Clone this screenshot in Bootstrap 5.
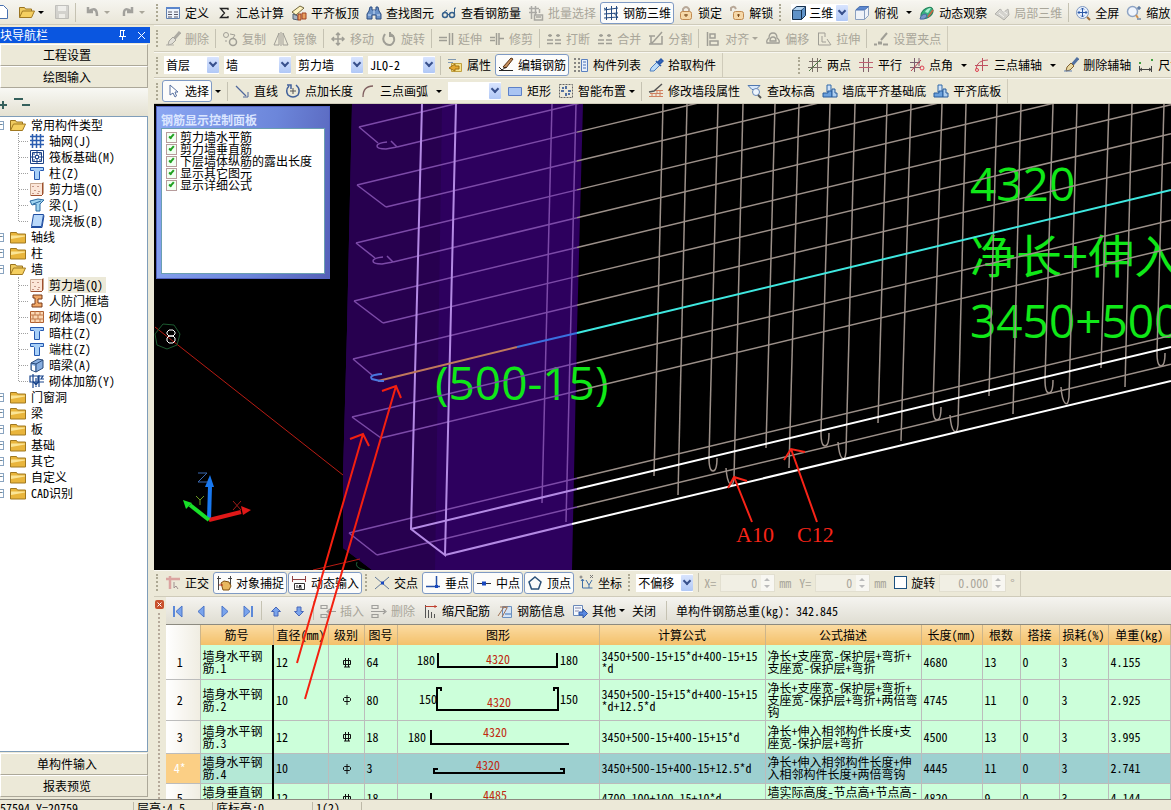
<!DOCTYPE html>
<html lang="zh-CN">
<head>
<meta charset="utf-8">
<meta name="viewport" content="width=device-width, initial-scale=1">
<title>钢筋三维</title>
<link href="https://cdn.jsdelivr.net/npm/bootstrap@5.3.0/dist/css/bootstrap.min.css" rel="stylesheet">
<style>
  body{font:12px/12px "Noto Sans Mono CJK SC","Noto Sans CJK SC",sans-serif;color:#000;background:#ece9d8}
  button,select,input{font:inherit;color:inherit}
  .ic{width:16px;height:16px;flex:none;fill:none;stroke-width:1}
  .bars{flex:none}
  .barrow{display:flex;align-items:stretch;background:#ece9d8;border-bottom:1px solid #cfcbba;border-top:1px solid #f8f7f1}
  .r1{height:25px;background:linear-gradient(#f6f5f0,#e9e6d8)} .r2{height:27px} .r3{height:26px}
  .seg{display:flex;align-items:center;gap:5px;padding:0 5px 0 2px;border-right:1px solid #cfcbba;flex:none}
  .seg.far{margin-left:73px}
  .seg.open-end{border:0}
  .snapbar .seg{padding-bottom:2px}
  .grip{width:3px;height:17px;border-left:2px dotted #aca893;flex:none}
  .rule{width:1px;height:19px;background:#c5c2b2;flex:none}
  .tool{display:flex;align-items:center;gap:4px;height:20px;padding:0;border:1px solid transparent;background:none;white-space:nowrap;flex:none}
  .tool:disabled{color:#a9a69a}
  .tool:disabled .ic{filter:grayscale(1);opacity:.5}
  .tool.on{height:22px;margin:0 -2px;padding:0 2px;background:#fcfcfb;border-color:#7f9ac4;border-radius:3px}
  .tool.drop::after,.caret-only::after{content:"";border:3px solid transparent;border-top-color:#000;border-bottom:0;margin:0 0 0 4px}
  .tool.drop:disabled::after{border-top-color:#a9a69a}
  .tool.drop.tight::after{margin-left:-1px}
  .caret-only{width:7px;border:0;background:none;padding:0;display:flex}
  .caret-only::after{margin:0}
  .combo{display:flex;align-items:center;background:#fff;height:18px;position:relative;flex:none}
  .combo select{appearance:none;border:0;background:none;padding:0 0 0 2px;width:100%;height:18px;outline:0}
  .combo::after{content:"";width:12px;height:16px;position:absolute;right:0;top:1px;background:linear-gradient(#d8e4fe,#b0c8f6);border-radius:1px;pointer-events:none}
  .combo::before{content:"";width:6px;height:6px;position:absolute;right:3px;top:4px;border:solid #38508c;border-width:0 2px 2px 0;transform:rotate(45deg);z-index:1;pointer-events:none}
  .w53{width:53px}.w55{width:55px}.w57{width:57px}.w67{width:67px}
  /* navigation dock */
  .side{width:154px;flex:none;background:#ece9d8}
  .side-top{height:25px;background:linear-gradient(#f6f5f0,#e9e6d8);border-bottom:1px solid #cfcbba}
  .side-top .edge{margin-left:-8px}
  .side-title{height:16px;margin:2px 4px 1px 0;background:#0a56e0;color:#fff}
  .wide{height:22px;margin-right:6px;border:1px solid;border-color:#fff #aca899 #aca899 #fff;background:#ece9d8;padding:0;text-align:center;flex:none}
  .wide.end{margin-bottom:2px}
  .wide span{padding-right:14px}
  .side-mini{height:28px;margin-right:6px;background:linear-gradient(#f8f8f4,#e4e1d2)}
  .tree{margin:0 6px 1px 0;background:#fff;border:1px solid #7f9db9;border-left:0;overflow:hidden}
  .tree ul{list-style:none;margin:0;padding:0}
  .tree li>div{height:16px;display:flex;align-items:center;white-space:nowrap}
  .tree a{color:#000;text-decoration:none;padding:2px 3px 2px 1px}
  .tree a.sel{background:#ece9d8}
  .branch>div::before{content:"−";width:7px;height:9px;margin-left:-3px;border:1px solid #8aa4c0;font-size:9px;line-height:6px;color:#345}
  .branch>div .ic{margin:0 4px 0 6px}
  .leafs{position:relative}
  .leafs::before{content:"";position:absolute;left:18px;top:0;bottom:8px;border-left:1px dotted #a0a0a0}
  .leafs li>div::before{content:"";width:9px;margin-left:19px;border-top:1px dotted #a0a0a0}
  .leafs li>div .ic{margin:0 3px 0 1px}
  /* drawing canvas */
  .view3d{background:#000;overflow:hidden;position:relative}
  .scene{position:absolute;inset:0;width:100%;height:100%}
  .palette{position:absolute;left:2px;top:2px;width:174px;height:173px;padding:4px;background:linear-gradient(100deg,#8aa6f2,#6c86da 60%,#5560b8);border:1px solid #5262c0}
  .palette h2{font-size:12px;line-height:17px;margin:0;color:#dbe6ff;font-weight:700}
  .palette .box{background:#fff;border:1px solid #6a9fb0;flex:1;padding:2px 0 0 4px}
  .palette label{display:flex;align-items:center;gap:3px;height:12px;white-space:nowrap}
  .chk{appearance:none;width:11px;height:11px;margin:0;border:1px solid #b79c9c;background:#f2fff2;position:relative;flex:none}
  .chk:checked::before{content:"";position:absolute;left:3px;top:0;width:3px;height:6px;border:solid #21a121;border-width:0 2px 2px 0;transform:rotate(40deg)}
  .chk.big{width:13px;height:13px;border-color:#1c5180;background:#fff}
  .spin{height:18px;background:#f1efe4;border:1px solid #e2dfd0;display:flex;align-items:center;color:#a9a69a;flex:none}
  .spin input{width:100%;min-width:0;border:0;background:none;text-align:right;padding:0 4px 0 0;color:#a9a69a}
  .spin svg{width:13px;height:16px;flex:none;background:#f8f7f2}
  .muted{color:#a9a69a}
  .fields{display:flex;align-items:center;gap:4px}
  /* bar-bending grid */
  .dock{height:202px;flex:none;background:#ece9d8}
  .dock-edge{width:12px;flex:none}
  .dock-close{width:9px;height:9px;margin:3px 0 4px 1px;padding:0;border:0;background:#c8502c;border-radius:2px;color:#fff;display:flex}
  .dock-close svg{width:9px;height:9px}
  .dock-edge i{flex:1;width:1px;margin-left:4px;border-left:2px dotted #b5a99a}
  .dock-bar{height:28px;display:flex;align-items:center;gap:5px;padding-left:3px;background:linear-gradient(#f5f4f0,#dfddd2);border-bottom:1px solid #8c8a80;flex:none}
  .sheet{overflow:hidden;background:#fff}
  .rebar{table-layout:fixed;width:100%;border-collapse:collapse}
  .rebar th{height:20px;background:linear-gradient(#fbdba2,#f3c06a);border-right:1px solid #cdb58a;text-align:center;font-weight:400;padding:0;white-space:nowrap}
  .rebar th:nth-child(1){width:34px}.rebar th:nth-child(2){width:73px}.rebar th:nth-child(3){width:55px}.rebar th:nth-child(4){width:36px}
  .rebar th:nth-child(5){width:33px}.rebar th:nth-child(6){width:202px}.rebar th:nth-child(7){width:166px}.rebar th:nth-child(8){width:156px}
  .rebar th:nth-child(9){width:61px}.rebar th:nth-child(10){width:38px}.rebar th:nth-child(11){width:39px}.rebar th:nth-child(12){width:49px}
  .rebar td{background:#ccffda;border:1px solid #bcbcbc;border-width:0 1px 1px 0;padding:0 1px 0 2px;vertical-align:middle;word-break:break-all;line-break:anywhere}
  .rebar th:first-child,.rebar td:first-child{background:linear-gradient(90deg,#fff,#f0ede2);text-align:center;padding:0 6px 0 0}
  .rebar td:nth-child(2){border-right:2px solid #000}
  .rebar td:nth-child(7){padding-right:5px}
  .rebar td.c{text-align:center}
  .rebar td.c svg{width:12px;height:12px;fill:none;stroke:#111}
  .rebar td.g{padding:0}
  .rebar td.g svg{display:block;width:100%}
  .rebar .cur td{background:#9dd0d0}
  .rebar .cur td:nth-child(2){background:#b4e8d6}
  .rebar .cur td:first-child{background:#fbcf85;color:#fff}
  .g path{fill:none;stroke:#000;stroke-width:2}
  .g .len{fill:#c02a10}
  .h33{height:34px}.h41{height:41px}.h32{height:33px}.h30{height:30px}
  .state{height:11px;flex:none;border-top:1px solid #8c8a80;overflow:hidden;padding-top:2px}
  .state span{border-right:1px solid #bdb9a8;padding-left:3px;flex:none}
  .state .s1{width:134px;padding-left:0}.state .s2{width:79px}.state .s3{width:100px}.state .s4{width:49px}
  .marks{position:absolute;inset:0;width:100%;height:100%;pointer-events:none}
</style>
<script src="https://cdn.jsdelivr.net/npm/bootstrap@5.3.0/dist/js/bootstrap.bundle.min.js"></script>
</head>
<body class="vh-100 d-flex flex-column overflow-hidden">
<svg class="d-none" xmlns="http://www.w3.org/2000/svg">
  <symbol id="form" viewBox="0 0 16 16"><path d="M1.500 2.500h13v11h-13z" fill="#eef3fb" stroke="#6080b0"/><path d="M1 2h14v2H1z" fill="#5b86cc"/><path d="M3 7h4M3 9.500h4M3 12h4M9 7h4M9 9.500h4M9 12h4" stroke="#556"/></symbol>
  <symbol id="sigma" viewBox="0 0 16 16"><path d="M12 5V3.500H4.500L8.500 8l-4 4.500H12V11" stroke="#222" stroke-width="1.300"/></symbol>
  <symbol id="slab" viewBox="0 0 16 16"><path d="M1 7l8-6 4 2-8 7z" fill="#fdf3c0" stroke="#70653a"/><path d="M2 9v5l5 1v-4z" fill="#a8b4c4" stroke="#506070"/><path d="M7 9h3v6H7zM11 8h4v6h-4z" fill="#e8a060" stroke="#a04020"/></symbol>
  <symbol id="bino" viewBox="0 0 16 16"><path d="M4 2h2v3h4V2h2l1 4 2 3v5h-5v-4H6v4H1V9l2-3z" fill="#6a92c8" stroke="#2d4c80"/><path d="M2 10h3M11 10h3M8 5v4" stroke="#cfe0f8"/></symbol>
  <symbol id="glass" viewBox="0 0 16 16"><circle cx="4" cy="10" r="2.500" stroke="#35608c" stroke-width="1.500"/><circle cx="11" cy="10" r="2.500" stroke="#35608c" stroke-width="1.500"/><path d="M6.500 9.500h2M2 8l4-3M13.500 10V3h1.500" stroke="#35608c"/></symbol>
  <symbol id="batch" viewBox="0 0 16 16"><path d="M1 3.500h10M1 7.500h8M3.500 1v13M7.500 1v9M6.500 10h8v5h-8zM8 12h5M11.500 4v4" stroke="#666" stroke-width="1.500"/></symbol>
  <symbol id="grid3" viewBox="0 0 16 16"><path d="M3.500 2v13M8.500 1v14M13.500 1v14M1 5l14-2M1 9l14-1M1 13l14-1M1 3l3 2M11 8l4 5" stroke="#244a80"/></symbol>
  <symbol id="lock" viewBox="0 0 16 16"><path d="M5 7V4q3-4 6 0v3" stroke="#b8a898" stroke-width="2"/><rect x="2.500" y="6.500" width="11" height="8" rx="2" fill="#f6d8a8" stroke="#c08a50"/><path d="M8 9v3M6 10h4" stroke="#7a4a1a"/></symbol>
  <symbol id="unlock" viewBox="0 0 16 16"><path d="M2 6V3q3-3 5 1" stroke="#b8a898" stroke-width="2"/><rect x="4.500" y="6.500" width="10" height="8" rx="2" fill="#f6d8a8" stroke="#c08a50"/><path d="M9.500 9v3M8 10h3" stroke="#7a4a1a"/></symbol>
  <symbol id="cube" viewBox="0 0 16 16"><path d="M1.500 5l4-3.500h9v9l-4 4h-9z" fill="#5f92c8" stroke="#16304e"/><path d="M1.500 5h9v9.500M10.500 5l4-3.500" stroke="#16304e"/><path d="M2 5l4-3h8l-4 3z" fill="#b8d6f0"/></symbol>
  <symbol id="cubetop" viewBox="0 0 16 16"><path d="M1.500 5l4-3.500h9v9l-4 4h-9z" fill="#eef2f8" stroke="#8aa0c0"/><path d="M2 5l4-3.500h8.500l-4 3.500z" fill="#5c88d0" stroke="#4a70b0"/><path d="M10.500 5v9.500" stroke="#8aa0c0"/></symbol>
  <symbol id="orbit" viewBox="0 0 16 16"><ellipse cx="8" cy="8" rx="7" ry="4.500" transform="rotate(-40 8 8)" fill="#38b080" stroke="#208058"/><path d="M6 7q2-4 6-4l-3 5z" fill="#a8f0d0"/><path d="M1 14q1-5 6-5l1 3q-3 3-7 2z" fill="#7898c8" stroke="#4868a0"/><path d="M9 12l5-7" stroke="#d06040" stroke-width="1.500"/></symbol>
  <symbol id="part" viewBox="0 0 16 16"><path d="M1 9l5-5 4 3 4-3 1 6-5 5-4-3z" fill="#bbb" stroke="#777"/><path d="M5 8l5 4M8 5l5 4" stroke="#fff"/></symbol>
  <symbol id="full" viewBox="0 0 16 16"><circle cx="7.500" cy="7.500" r="6" fill="#e8f0fc" stroke="#7f98c0"/><path d="M7.500 3v9M3 7.500h9M6 4.500L7.500 3 9 4.500M6 10.500l1.500 1.500L9 10.500M4.500 6L3 7.500 4.500 9M10.500 6L12 7.500 10.500 9" stroke="#2a58a8"/><path d="M12 12l3 3" stroke="#a07040" stroke-width="2"/></symbol>
  <symbol id="zoomer" viewBox="0 0 16 16"><circle cx="6.500" cy="6.500" r="5" fill="#f0f5fd" stroke="#8fa4c4" stroke-width="1.500"/><path d="M10 10l2 3" stroke="#d09050" stroke-width="2"/><path d="M13 1v4M11 3h4M11 14h4" stroke="#345a90"/></symbol>
  <symbol id="brush" viewBox="0 0 16 16"><path d="M15 1L9 8" stroke="#5070a0" stroke-width="3"/><path d="M8 6l3 3-4 4-4 1 1-4z" fill="#e8d8a0" stroke="#806030"/><path d="M1 14h8" stroke="#6080b0"/></symbol>
  <symbol id="copy" viewBox="0 0 16 16"><circle cx="4" cy="4" r="2.500" stroke="#555"/><circle cx="11" cy="11" r="3.500" stroke="#555" stroke-width="1.500"/><path d="M8 3l5 1-2 3M4 9v2" stroke="#555"/></symbol>
  <symbol id="mirror" viewBox="0 0 16 16"><path d="M6 2v12H1zM10 2v12h5zM8 1v14" stroke="#555"/></symbol>
  <symbol id="move" viewBox="0 0 16 16"><path d="M8 2v12M2 8h12M6 4l2-2 2 2M6 12l2 2 2-2M4 6L2 8l2 2M12 6l2 2-2 2" stroke="#555" stroke-width="1.500"/></symbol>
  <symbol id="turn" viewBox="0 0 16 16"><path d="M4 3q-4 6 1 10 6 3 8-3 1-5-4-7M9 1v4h4" stroke="#555" stroke-width="2"/></symbol>
  <symbol id="extend" viewBox="0 0 16 16"><path d="M1 6.500h8M1 9.500h8M11.500 2v12M14.500 2v12" stroke="#555" stroke-width="1.500"/></symbol>
  <symbol id="trim" viewBox="0 0 16 16"><path d="M1 6.500h5M1 9.500h5M10 7.500h5M7.500 2v12M10 2v12" stroke="#555" stroke-width="1.500"/></symbol>
  <symbol id="cutbar" viewBox="0 0 16 16"><path d="M2 4.500h4M4 3v3M10 4.500h4M12 3v3M1 9h6M9 9h6M1 12.500h6M9 12.500h6" stroke="#555" stroke-width="1.500"/></symbol>
  <symbol id="split" viewBox="0 0 16 16"><path d="M1 5h6M1 13h13V5M3 5v8M14 1l-8 9-2 2" stroke="#555" stroke-width="1.500"/></symbol>
  <symbol id="align" viewBox="0 0 16 16"><path d="M2.500 1v14M5 3h5v4H5zM5 10h8v4H5z" stroke="#555" stroke-width="1.500"/></symbol>
  <symbol id="offset" viewBox="0 0 16 16"><path d="M2 12q-1-3 2-5 0-5 4-5t4 5q3 2 2 5zM5 10q0-4 3-4t3 4z" stroke="#555" stroke-width="1.300"/></symbol>
  <symbol id="stretch" viewBox="0 0 16 16"><path d="M2.500 2v12h12M2 2h7v4M6 5v6h4M11 8l4 6" stroke="#555"/></symbol>
  <symbol id="clampic" viewBox="0 0 16 16"><path d="M1 13.500h3M10 13.500h5M14 2L8 9" stroke="#555" stroke-width="2"/><path d="M5 12h4" stroke="#555" stroke-width="3"/></symbol>
  <symbol id="prop" viewBox="0 0 16 16"><path d="M1 2.500h8M1 5.500h5" stroke="#8098b0"/><path d="M4.500 6.500h10v8h-10z" fill="#f7e38c" stroke="#c0a040"/><path d="M2 11l6-4v2h4v3H8v2z" fill="#e4a830" stroke="#a07010"/></symbol>
  <symbol id="pencil" viewBox="0 0 16 16"><path d="M1 13.500h14" stroke="#222"/><path d="M5 10l8-9 2 1-7 9z" fill="#c89060" stroke="#543010"/><path d="M1 10l3 3 4-3" stroke="#222"/></symbol>
  <symbol id="listic" viewBox="0 0 16 16"><path d="M1 2h2M1 6h2M1 10h2M1 14h2M5 2h2M5 6h2M5 10h2M5 14h2" stroke="#666" stroke-width="1.500"/><path d="M8.500 2.500h6v12h-6z" fill="#e8f0fa" stroke="#5a80c0"/><path d="M10 5h3M10 8h3M10 11h3" stroke="#4870b8"/></symbol>
  <symbol id="dropper" viewBox="0 0 16 16"><path d="M2 14l1-3 6-6 3 3-6 6z" fill="#bcdcf8" stroke="#5080c0"/><path d="M8 4l5 5M10 5l3-3 2 2-3 3z" stroke="#2858a8" fill="#3868c0" stroke-width="1.500"/></symbol>
  <symbol id="ax2" viewBox="0 0 16 16"><path d="M5.500 1v14M10.500 1v14M1 10.500h14M2 4.500h12" stroke="#7a7068"/><path d="M2 14L14 2" stroke="#4a7a40"/></symbol>
  <symbol id="axp" viewBox="0 0 16 16"><path d="M5.500 1v14M10.500 1v14" stroke="#80606a"/><path d="M1 5.500h14M1 10.500h14" stroke="#c06070"/></symbol>
  <symbol id="axa" viewBox="0 0 16 16"><path d="M5.500 1v14M1 10.500h11M1 5.500h10M10 1v8" stroke="#7a6070"/><path d="M2 14L12 3" stroke="#c04050"/><circle cx="13" cy="11" r="2" stroke="#e04050"/></symbol>
  <symbol id="ax3" viewBox="0 0 16 16"><path d="M2 12Q3 3 14 3M8.500 1v13M1 8.500h13" stroke="#c05060"/><circle cx="3" cy="13" r="1.500" stroke="#e04050"/></symbol>
  <symbol id="dimic" viewBox="0 0 16 16"><path d="M1.500 9v6M13.500 9v6M2 12.500h11M4 11l-2 1.500 2 1.500M11 11l2 1.500-2 1.500" stroke="#444"/><path d="M1 6h2M13 3h2" stroke="#40a040" stroke-width="2"/></symbol>
  <symbol id="arrow" viewBox="0 0 16 16"><path d="M5 2v10l3-2 2 4 1.500-1L10 9h3z" fill="#fff" stroke="#5670a0"/></symbol>
  <symbol id="lineic" viewBox="0 0 16 16"><path d="M2 3l10 10" stroke="#50689c" stroke-width="1.300"/><path d="M14 9v5H9" stroke="#50689c"/></symbol>
  <symbol id="ptlen" viewBox="0 0 16 16"><path d="M4 3q-4 4-1 9 5 4 10 0 3-6-2-10M2 2h4v4" stroke="#40609a" stroke-width="1.500"/><path d="M8 5v6M5 8h6" stroke="#555"/></symbol>
  <symbol id="arcic" viewBox="0 0 16 16"><path d="M3 14Q3 3 13 3" stroke="#806060" stroke-width="1.300"/></symbol>
  <symbol id="rectic" viewBox="0 0 16 16"><path d="M1.500 4.500h13v8h-13z" fill="#a9c4f2" stroke="#5c80c8"/></symbol>
  <symbol id="smart" viewBox="0 0 16 16"><path d="M1.500 1.500h13v13h-13z" stroke="#666" stroke-dasharray="2 1"/><path d="M8 3v3M8 10v3M3 8h3M10 8h3M4 5h2M10 11h2" stroke="#204a90" stroke-width="1.500"/></symbol>
  <symbol id="wallic" viewBox="0 0 16 16"><path d="M6 7.500h9M2 10.500h13M1 13.500h14M9 8v2M12 8v2M8 11v2M4 11v2M12 11v2" stroke="#d08060"/><path d="M14 1L6 8 1 9" stroke="#555" stroke-width="1.500"/></symbol>
  <symbol id="lookup" viewBox="0 0 16 16"><path d="M1 2.500h12l-4 4H5z" fill="#d8e8fa" stroke="#5078b0"/><circle cx="9" cy="9" r="3.500" fill="#eef5fd" stroke="#6888b8"/><path d="M11 12l3 3" stroke="#555" stroke-width="2"/></symbol>
  <symbol id="base" viewBox="0 0 16 16"><path d="M5 2h4v7H5z" fill="#cfe2f8" stroke="#3068a8"/><path d="M1 10h5V8h4v6H1z" fill="#6aa0dc" stroke="#285c9c"/><path d="M10 6h3v4h2v4h-5z" fill="#b0d0f0" stroke="#285c9c"/></symbol>
  <symbol id="ortho" viewBox="0 0 16 16"><path d="M1 4h14M5 1v13" stroke="#dba4a0" stroke-width="2.500"/><path d="M9 7v6l2-2 2 3" stroke="#a09090"/></symbol>
  <symbol id="snap" viewBox="0 0 16 16"><path d="M2.500 1v14M14.500 1v9M1 3.500h4M12 3.500h4" stroke="#444"/><path d="M5 8l3-2 5 1 2 4-2 4H7z" fill="#e8b860" stroke="#805010"/><path d="M3 10h4" stroke="#c03020"/></symbol>
  <symbol id="dyn" viewBox="0 0 16 16"><path d="M1.500 1v6M14.500 1v6M2 4.500h12" stroke="#904040"/><path d="M3.500 8.500h10v6h-10z" fill="#fff" stroke="#333"/><path d="M6 10v3M8 10.500h2v1H8v1.500h3" stroke="#222"/></symbol>
  <symbol id="cross" viewBox="0 0 16 16"><path d="M1 2l14 12M15 2L1 14" stroke="#607898"/><path d="M7 8h3" stroke="#1848c0" stroke-width="3"/></symbol>
  <symbol id="perp" viewBox="0 0 16 16"><path d="M1 11.500h14M11.500 1v12" stroke="#2450a8" stroke-width="1.500"/><path d="M10 11.500h3" stroke="#1848c0" stroke-width="3"/></symbol>
  <symbol id="mid" viewBox="0 0 16 16"><path d="M1 8.500h14" stroke="#333"/><path d="M6 8.500h4" stroke="#1848c0" stroke-width="4"/></symbol>
  <symbol id="vertx" viewBox="0 0 16 16"><path d="M8 2l6 5-2.500 7h-7L2 7z" stroke="#2a5078" stroke-width="1.500"/></symbol>
  <symbol id="coord" viewBox="0 0 16 16"><path d="M4.500 4v9h10M3 6l1.500-2L6 6M8 5l3 5 3-5M11 10v3" stroke="#4070a8"/><circle cx="3" cy="2" r="1" stroke="#777"/><path d="M12 0l3 3M15 0l-3 3" stroke="#777"/></symbol>
  <symbol id="first" viewBox="0 0 16 16"><path d="M4 3v11" stroke="#5b88d8" stroke-width="2"/><path d="M12 3v11L6 8.500z" fill="#7aa4ec" stroke="#4a74c8"/></symbol>
  <symbol id="prev" viewBox="0 0 16 16"><path d="M11 3v11L5 8.500z" fill="#7aa4ec" stroke="#4a74c8"/></symbol>
  <symbol id="next" viewBox="0 0 16 16"><path d="M6 3v11l6-5.500z" fill="#7aa4ec" stroke="#4a74c8"/></symbol>
  <symbol id="last" viewBox="0 0 16 16"><path d="M13 3v11" stroke="#5b88d8" stroke-width="2"/><path d="M5 3v11l6-5.500z" fill="#7aa4ec" stroke="#4a74c8"/></symbol>
  <symbol id="up" viewBox="0 0 16 16"><path d="M8 4l4.500 4.500H10V13H6V8.500H3.500z" fill="#7aa4ec" stroke="#4a68b8"/></symbol>
  <symbol id="down" viewBox="0 0 16 16"><path d="M8 13l4.500-4.500H10V4H6v4.500H3.500z" fill="#7aa4ec" stroke="#4a68b8"/></symbol>
  <symbol id="rowin" viewBox="0 0 16 16"><path d="M1 2.500h6v3H1zM1 11.500h6v3H1zM7 8.500h9M10 6L7 8.500 10 11" stroke="#555" stroke-width="1.200"/></symbol>
  <symbol id="rowdel" viewBox="0 0 16 16"><path d="M1 2.500h6v3H1zM1 11.500h6v3H1zM0 8.500h14M12 6l3 2.500-3 2.500" stroke="#555" stroke-width="1.200"/></symbol>
  <symbol id="scalebar" viewBox="0 0 16 16"><path d="M3.500 2v13M6.500 7v8M9.500 9v6M12.500 11v4" stroke="#555"/><path d="M3 3.500h12M13 2v3" stroke="#c04030"/></symbol>
  <symbol id="info" viewBox="0 0 16 16"><path d="M5.500 3.500h9v11h-9z" fill="#d4e4f6" stroke="#6a90c0"/><path d="M1 13L7 4l3 1-5 9M3 4h8" stroke="#a07050"/><path d="M8 11h6" stroke="#4070b0"/></symbol>
  <symbol id="other" viewBox="0 0 16 16"><path d="M1.500 2.500h9v10h-9z" fill="#f4f8fd" stroke="#6a88b8"/><path d="M3 5h6M3 8h4" stroke="#88a"/><path d="M7 9h4V6l4.500 4.500L11 15v-3H7z" fill="#5a88e0" stroke="#3058a8"/></symbol>
  <symbol id="fold" viewBox="0 0 16 16"><path d="M.5 3.500h6l1 1.500h8v9H.5z" fill="#e9b53c" stroke="#a07820"/><path d="M1 6.500h14v1L1 10z" fill="#fbe596"/></symbol>
  <symbol id="foldo" viewBox="0 0 16 16"><path d="M.5 13.500v-10h5l1 1.500h6v2" fill="#f0cb60" stroke="#9a7420"/><path d="M.5 13.500l3-6.500h12l-3 6.500z" fill="#f5cf60" stroke="#a07820"/></symbol>
  <symbol id="mesh" viewBox="0 0 16 16"><path d="M3.500 1v14M7.500 1v14M11.500 1v14M1 3.500h14M1 7.500h14M1 11.500h14" stroke="#2a5cb0" stroke-width="1.500"/></symbol>
  <symbol id="raft" viewBox="0 0 16 16"><path d="M1.500 1.500h13v13h-13zM3.500 3.500h9v9h-9zM6.500 6.500h3v3h-3zM8 1v5M8 10v5M1 8h5M10 8h5M5 3v3M11 3v3M5 10v3M11 10v3" stroke="#1f4488"/></symbol>
  <symbol id="col" viewBox="0 0 16 16"><path d="M1.500 2.500h13v3h-3l-1 1v8h-5v-8l-1-1h-3z" fill="#a8d0f8" stroke="#2458b0"/></symbol>
  <symbol id="wallq" viewBox="0 0 16 16"><path d="M1.500 2.500h11l2-1v11l-2 2h-11z" fill="#fbe6d8" stroke="#c8a890"/><path d="M4 5v1M9 5v1M6 9v1M10 10v1M4 12v1M9 12v1" stroke="#904838"/><path d="M13.500 2v12M2 14.500h11" stroke="#a05030"/></symbol>
  <symbol id="beam" viewBox="0 0 16 16"><path d="M1 4l8-2 6 1-4 4v7H7V7L3 8z" fill="#a0d4f0" stroke="#2868a0"/><path d="M4 7l8-3" stroke="#2868a0"/></symbol>
  <symbol id="plate" viewBox="0 0 16 16"><path d="M4.500 1.500h10l-2 12h-10z" fill="#b8d8fa" stroke="#1e4ca0"/><path d="M2 14.500h11l2-12" stroke="#1e4ca0"/></symbol>
  <symbol id="frame" viewBox="0 0 16 16"><path d="M4 2h9v4H9v4h4v4H3v-3h3V5H4z" fill="#f0a868" stroke="#7a3a18"/></symbol>
  <symbol id="brick" viewBox="0 0 16 16"><path d="M1.500 2.500h13v11h-13z" fill="#fbd8b4" stroke="#b06030"/><path d="M1 6h14M1 10h14M6 2v4M11 2v4M4 6v4M9 6v4M6 10v4M11 10v4" stroke="#c07848"/></symbol>
  <symbol id="dbeam" viewBox="0 0 16 16"><path d="M2 6l7-4 5 1v8l-7 4-5-2z" fill="#88aee0" stroke="#284878"/><path d="M2 6l5 1 7-4M7 7v8" stroke="#284878"/><path d="M3 8l3 1v5l-3-1z" fill="#fff"/></symbol>
  <symbol id="masn" viewBox="0 0 16 16"><path d="M1 3h8v6H1zM4 1v14M7 5v9M10 2v12M4 8l3 4 3-4M10 3h4l-2 3h3M10 9h5" stroke="#18448c" stroke-width="1.200"/></symbol>
  <symbol id="save" viewBox="0 0 16 16"><path d="M1.500 1.500h13v13h-13z" fill="#b8b8b8" stroke="#909090"/><path d="M4 2h8v5H4zM5 10h6v4H5z" fill="#eee"/></symbol>
  <symbol id="newdoc" viewBox="0 0 16 16"><path d="M2.500 1.500h8l4 4v9h-12z" fill="#fff" stroke="#4870b0"/></symbol>
  <symbol id="hrb" viewBox="0 0 12 12"><path d="M2.500 3.500h7v4h-7zM4.500 1v9M7.500 1v9M3 10h6"/></symbol>
  <symbol id="hpb" viewBox="0 0 12 12"><path d="M3.500 3.500h5l1 1v2l-1 1h-5l-1-1v-2zM6 1v10"/></symbol>
</svg>

<div class="d-flex flex-grow-1 overflow-hidden">
  <aside class="side d-flex flex-column">
    <div class="side-top d-flex align-items-center overflow-hidden">
      <button class="tool edge" aria-label="新建"><svg class="ic"><use href="#newdoc"/></svg></button>
      <button class="tool drop tight ms-2" aria-label="打开"><svg class="ic"><use href="#foldo"/></svg></button>
      <button class="tool ms-2" disabled aria-label="保存"><svg class="ic"><use href="#save"/></svg></button>
      <span class="rule mx-1"></span>
      <button class="tool drop tight ms-1" disabled aria-label="撤销"><svg class="ic" viewBox="0 0 16 16"><path d="M3 3v5h5M3 8q9-7 9 4" stroke="#556" stroke-width="2.500"/></svg></button>
      <button class="tool drop tight ms-2" disabled aria-label="重做"><svg class="ic" viewBox="0 0 16 16"><path d="M12 3v5H7M12 8Q3 1 4 12" stroke="#556" stroke-width="2.500"/></svg></button>
    </div>
    <div class="side-title d-flex align-items-center flex-shrink-0">
      <span class="flex-grow-1">块导航栏</span>
      <svg class="ic" viewBox="0 0 16 16"><path d="M6 3.500h5M6.500 4v5M9.500 4v5M5 9.500h7M8.500 10v3" stroke="#fff"/></svg>
      <svg class="ic ms-1" viewBox="0 0 16 16"><path d="M4 5l7 7M11 5l-7 7" stroke="#fff"/></svg>
    </div>
    <button class="wide"><span>工程设置</span></button>
    <button class="wide"><span>绘图输入</span></button>
    <div class="side-mini flex-shrink-0"><svg width="40" height="28" stroke="#35605c" stroke-width="2"><path d="M-2 17h9M3 13v8M14 11h9M22 17h8"/></svg></div>
    <nav class="tree flex-grow-1">
      <ul>
        <li class="branch"><div><svg class="ic"><use href="#foldo"/></svg><a href="#">常用构件类型</a></div></li>
        <li><ul class="leafs">
          <li><div><svg class="ic"><use href="#mesh"/></svg><a href="#">轴网(J)</a></div></li>
          <li><div><svg class="ic"><use href="#raft"/></svg><a href="#">筏板基础(M)</a></div></li>
          <li><div><svg class="ic"><use href="#col"/></svg><a href="#">柱(Z)</a></div></li>
          <li><div><svg class="ic"><use href="#wallq"/></svg><a href="#">剪力墙(Q)</a></div></li>
          <li><div><svg class="ic"><use href="#beam"/></svg><a href="#">梁(L)</a></div></li>
          <li><div><svg class="ic"><use href="#plate"/></svg><a href="#">现浇板(B)</a></div></li>
        </ul></li>
        <li class="branch"><div><svg class="ic"><use href="#fold"/></svg><a href="#">轴线</a></div></li>
        <li class="branch"><div><svg class="ic"><use href="#fold"/></svg><a href="#">柱</a></div></li>
        <li class="branch"><div><svg class="ic"><use href="#foldo"/></svg><a href="#">墙</a></div></li>
        <li><ul class="leafs">
          <li><div><svg class="ic"><use href="#wallq"/></svg><a href="#" class="sel">剪力墙(Q)</a></div></li>
          <li><div><svg class="ic"><use href="#frame"/></svg><a href="#">人防门框墙</a></div></li>
          <li><div><svg class="ic"><use href="#brick"/></svg><a href="#">砌体墙(Q)</a></div></li>
          <li><div><svg class="ic"><use href="#col"/></svg><a href="#">暗柱(Z)</a></div></li>
          <li><div><svg class="ic"><use href="#col"/></svg><a href="#">端柱(Z)</a></div></li>
          <li><div><svg class="ic"><use href="#dbeam"/></svg><a href="#">暗梁(A)</a></div></li>
          <li><div><svg class="ic"><use href="#masn"/></svg><a href="#">砌体加筋(Y)</a></div></li>
        </ul></li>
        <li class="branch"><div><svg class="ic"><use href="#fold"/></svg><a href="#">门窗洞</a></div></li>
        <li class="branch"><div><svg class="ic"><use href="#fold"/></svg><a href="#">梁</a></div></li>
        <li class="branch"><div><svg class="ic"><use href="#fold"/></svg><a href="#">板</a></div></li>
        <li class="branch"><div><svg class="ic"><use href="#fold"/></svg><a href="#">基础</a></div></li>
        <li class="branch"><div><svg class="ic"><use href="#fold"/></svg><a href="#">其它</a></div></li>
        <li class="branch"><div><svg class="ic"><use href="#fold"/></svg><a href="#">自定义</a></div></li>
        <li class="branch"><div><svg class="ic"><use href="#fold"/></svg><a href="#">CAD识别</a></div></li>
      </ul>
    </nav>
    <button class="wide"><span>单构件输入</span></button>
    <button class="wide end"><span>报表预览</span></button>
  </aside>

  <main class="flex-grow-1 d-flex flex-column position-relative overflow-hidden">
    <div class="bars">
      <div class="barrow r1">
        <div class="seg open-end">
          <span class="grip"></span>
          <button class="tool"><svg class="ic"><use href="#form"/></svg>定义</button>
          <button class="tool"><svg class="ic"><use href="#sigma"/></svg>汇总计算</button>
          <button class="tool"><svg class="ic"><use href="#slab"/></svg>平齐板顶</button>
          <button class="tool"><svg class="ic"><use href="#bino"/></svg>查找图元</button>
          <button class="tool"><svg class="ic"><use href="#glass"/></svg>查看钢筋量</button>
          <button class="tool" disabled><svg class="ic"><use href="#batch"/></svg>批量选择</button>
          <button class="tool on"><svg class="ic"><use href="#grid3"/></svg>钢筋三维</button>
          <button class="tool"><svg class="ic"><use href="#lock"/></svg>锁定</button>
          <button class="tool"><svg class="ic"><use href="#unlock"/></svg>解锁</button>
          <span class="grip me-1"></span>
          <span class="combo w57"><svg class="ic"><use href="#cube"/></svg><select aria-label="视图"><option>三维</option></select></span>
          <button class="tool drop"><svg class="ic"><use href="#cubetop"/></svg>俯视</button>
          <button class="tool"><svg class="ic"><use href="#orbit"/></svg>动态观察</button>
          <button class="tool" disabled><svg class="ic"><use href="#part"/></svg>局部三维</button>
          <span class="rule"></span>
          <button class="tool"><svg class="ic"><use href="#full"/></svg>全屏</button>
          <button class="tool"><svg class="ic"><use href="#zoomer"/></svg>缩放</button>
        </div>
      </div>
      <div class="barrow r2">
        <div class="seg">
          <span class="grip"></span>
          <button class="tool" disabled><svg class="ic"><use href="#brush"/></svg>删除</button>
          <span class="rule"></span>
          <button class="tool" disabled><svg class="ic"><use href="#copy"/></svg>复制</button>
          <button class="tool" disabled><svg class="ic"><use href="#mirror"/></svg>镜像</button>
          <span class="rule"></span>
          <button class="tool" disabled><svg class="ic"><use href="#move"/></svg>移动</button>
          <button class="tool" disabled><svg class="ic"><use href="#turn"/></svg>旋转</button>
          <span class="rule"></span>
          <button class="tool" disabled><svg class="ic"><use href="#extend"/></svg>延伸</button>
          <button class="tool" disabled><svg class="ic"><use href="#trim"/></svg>修剪</button>
          <span class="rule"></span>
          <button class="tool" disabled><svg class="ic"><use href="#cutbar"/></svg>打断</button>
          <button class="tool" disabled><svg class="ic"><use href="#cutbar"/></svg>合并</button>
          <button class="tool" disabled><svg class="ic"><use href="#split"/></svg>分割</button>
          <span class="rule"></span>
          <button class="tool drop tight" disabled><svg class="ic"><use href="#align"/></svg>对齐</button>
          <button class="tool" disabled><svg class="ic"><use href="#offset"/></svg>偏移</button>
          <button class="tool" disabled><svg class="ic"><use href="#stretch"/></svg>拉伸</button>
          <span class="rule"></span>
          <button class="tool" disabled><svg class="ic"><use href="#clampic"/></svg>设置夹点</button>
        </div>
      </div>
      <div class="barrow r3">
        <div class="seg">
          <span class="grip"></span>
          <span class="combo w55"><select aria-label="楼层"><option>首层</option></select></span>
          <span class="combo w67"><select aria-label="构件"><option>墙</option></select></span>
          <span class="combo w67"><select aria-label="类型"><option>剪力墙</option></select></span>
          <span class="combo w67"><select aria-label="名称"><option>JLQ-2</option></select></span>
          <span class="rule"></span>
          <button class="tool"><svg class="ic"><use href="#prop"/></svg>属性</button>
          <button class="tool on"><svg class="ic"><use href="#pencil"/></svg>编辑钢筋</button>
          <button class="tool"><svg class="ic"><use href="#listic"/></svg>构件列表</button>
          <button class="tool"><svg class="ic"><use href="#dropper"/></svg>拾取构件</button>
        </div>
        <div class="seg far open-end">
          <span class="grip"></span>
          <button class="tool"><svg class="ic"><use href="#ax2"/></svg>两点</button>
          <button class="tool"><svg class="ic"><use href="#axp"/></svg>平行</button>
          <button class="tool drop"><svg class="ic"><use href="#axa"/></svg>点角</button>
          <button class="tool drop"><svg class="ic"><use href="#ax3"/></svg>三点辅轴</button>
          <button class="tool"><svg class="ic"><use href="#brush"/></svg>删除辅轴</button>
          <button class="tool"><svg class="ic"><use href="#dimic"/></svg>尺寸</button>
        </div>
      </div>
      <div class="barrow r3">
        <div class="seg">
          <span class="grip"></span>
          <button class="tool on"><svg class="ic"><use href="#arrow"/></svg>选择</button>
          <button class="caret-only" aria-label="选择方式"></button>
          <span class="rule"></span>
          <button class="tool"><svg class="ic"><use href="#lineic"/></svg>直线</button>
          <button class="tool"><svg class="ic"><use href="#ptlen"/></svg>点加长度</button>
          <button class="tool drop"><svg class="ic"><use href="#arcic"/></svg>三点画弧</button>
          <span class="combo w53"><select aria-label="弧参数"><option></option></select></span>
          <button class="tool"><svg class="ic"><use href="#rectic"/></svg>矩形</button>
          <button class="tool drop tight"><svg class="ic"><use href="#smart"/></svg>智能布置</button>
          <span class="rule"></span>
          <button class="tool"><svg class="ic"><use href="#wallic"/></svg>修改墙段属性</button>
          <button class="tool"><svg class="ic"><use href="#lookup"/></svg>查改标高</button>
          <button class="tool"><svg class="ic"><use href="#base"/></svg>墙底平齐基础底</button>
          <button class="tool"><svg class="ic"><use href="#base"/></svg>平齐底板</button>
        </div>
      </div>
    </div>

    <section class="view3d flex-grow-1">
      <svg class="scene" fill="none">
        <g transform="translate(-154 -104)">
          <path d="M352 104L347 330 343 475V548L372 570H572L577 330 583 104z" fill="#2d005e"/>
          <path d="M352 104L347 330 343 475V548L372 570H435L442 104z" fill="#27004f"/>
          <g fill="#10e818" font-family="'Open Sans','Noto Sans CJK SC',sans-serif" font-size="46">
            <text x="435" y="400">(500-15)</text><text x="970" y="201">4320</text>
            <text x="970" y="273">净长+伸入</text><text x="970" y="338">3450+500</text>
          </g>
          <g id="cage" stroke-width="1.500"></g>
          <g stroke="#b48ae4" stroke-width="2"><path d="M422 104L411 529 445 555 456 104"/><path d="M411 529L577 489M445 555L572 524"/></g>
          <path d="M577 489L1171 347M572 524L1171 381" stroke="#fff" stroke-width="2"/>
          <path d="M378 381L517 347" stroke="#c0785c" stroke-width="2"/>
          <path d="M517 347L577 333" stroke="#3a70e0" stroke-width="2"/>
          <path d="M577 333L1171 190" stroke="#3fe8e0" stroke-width="2"/>
          <path d="M382 374q-14 1-10 5l8 2h4" stroke="#4a78e0" stroke-width="2"/>
          <path d="M155 327L343 475M313 570L360 559" stroke="#b81c14"/>
          <path d="M357 562q-3 6 8 8" stroke="#206038"/>
          <path d="M163 324l11 1 6 9-3 11-10 4-10-4-2-11z" stroke="#1c5a30"/>
          <path d="M169 330h4l2 2v2l-2 2h-4l-2-2v-2zM169 336h4l2 2v3l-2 2h-4l-2-2v-3z" stroke="#fff"/>
          <path d="M209 520L210 486" stroke="#1878f0" stroke-width="4"/><path d="M210 475l-5 12h9z" fill="#1878f0"/>
          <path d="M209 520L241 512" stroke="#e01818" stroke-width="4"/><path d="M251 510l-10-4 2 9z" fill="#e01818"/>
          <path d="M209 520L190 505" stroke="#18e028" stroke-width="4"/><path d="M183 500l3 9 6-6z" fill="#18e028"/>
          <path d="M198 473h9l-9 9h10" stroke="#3a68b0"/><path d="M196 496l4 4 4-4M200 500v5" stroke="#6a9a20"/><path d="M233 501l8 9M241 501l-8 9" stroke="#a01c18"/>
          <g fill="#f82418" font-family="'Liberation Serif',serif" font-size="22"><text x="736" y="542">A10</text><text x="797" y="542">C12</text></g>
          <path d="M752 522L734 477M728 488l6-11 13 4M817 522L791 449M784 460l7-11 14 3" stroke="#f82418" stroke-width="2"/>
        </g>
      </svg>
      <div class="palette d-flex flex-column">
        <h2>钢筋显示控制面板</h2>
        <div class="box">
          <label><input class="chk" type="checkbox" checked>剪力墙水平筋</label>
          <label><input class="chk" type="checkbox" checked>剪力墙垂直筋</label>
          <label><input class="chk" type="checkbox" checked>下层墙体纵筋的露出长度</label>
          <label><input class="chk" type="checkbox" checked>显示其它图元</label>
          <label><input class="chk" type="checkbox" checked>显示详细公式</label>
        </div>
      </div>
    </section>

    <div class="barrow r2 snapbar">
      <div class="seg">
        <span class="grip"></span>
        <button class="tool"><svg class="ic"><use href="#ortho"/></svg>正交</button>
        <button class="tool on"><svg class="ic"><use href="#snap"/></svg>对象捕捉</button>
        <button class="tool on"><svg class="ic"><use href="#dyn"/></svg>动态输入</button>
        <span class="grip"></span>
        <button class="tool"><svg class="ic"><use href="#cross"/></svg>交点</button>
        <button class="tool on"><svg class="ic"><use href="#perp"/></svg>垂点</button>
        <button class="tool on"><svg class="ic"><use href="#mid"/></svg>中点</button>
        <button class="tool on"><svg class="ic"><use href="#vertx"/></svg>顶点</button>
        <button class="tool"><svg class="ic"><use href="#coord"/></svg>坐标</button>
        <span class="grip"></span>
        <span class="combo w57"><select aria-label="偏移方式"><option>不偏移</option></select></span>
        <span class="rule"></span>
        <div class="fields">
          <label class="muted" for="dx">X=</label>
          <span class="spin w55"><input id="dx" value="0" disabled><svg viewBox="0 0 13 16"><path d="M3 6l3-3 3 3zM3 10l3 3 3-3z" fill="#bbb"/></svg></span>
          <span class="muted me-1">mm</span>
          <label class="muted" for="dy">Y=</label>
          <span class="spin w55"><input id="dy" value="0" disabled><svg viewBox="0 0 13 16"><path d="M3 6l3-3 3 3zM3 10l3 3 3-3z" fill="#bbb"/></svg></span>
          <span class="muted me-1">mm</span>
          <input class="chk big" type="checkbox" id="rot">
          <label for="rot">旋转</label>
          <span class="spin w67"><input value="0.000" aria-label="角度" disabled><svg viewBox="0 0 13 16"><path d="M3 6l3-3 3 3zM3 10l3 3 3-3z" fill="#bbb"/></svg></span>
          <span class="muted">°</span>
        </div>
      </div>
    </div>

    <section class="dock d-flex">
      <div class="dock-edge d-flex flex-column">
        <button class="dock-close" aria-label="关闭面板"><svg viewBox="0 0 9 9"><path d="M2.500 2.500l4 4M6.500 2.500l-4 4" stroke="#fff"/></svg></button><i></i>
      </div>
      <div class="flex-grow-1 d-flex flex-column overflow-hidden">
        <div class="dock-bar">
          <button class="tool" aria-label="首行"><svg class="ic"><use href="#first"/></svg></button>
          <button class="tool" aria-label="上一行"><svg class="ic"><use href="#prev"/></svg></button>
          <button class="tool" aria-label="下一行"><svg class="ic"><use href="#next"/></svg></button>
          <button class="tool" aria-label="末行"><svg class="ic"><use href="#last"/></svg></button>
          <span class="rule"></span>
          <button class="tool" aria-label="上移"><svg class="ic"><use href="#up"/></svg></button>
          <button class="tool" aria-label="下移"><svg class="ic"><use href="#down"/></svg></button>
          <span class="rule"></span>
          <button class="tool" disabled><svg class="ic"><use href="#rowin"/></svg>插入</button>
          <button class="tool" disabled><svg class="ic"><use href="#rowdel"/></svg>删除</button>
          <button class="tool"><svg class="ic"><use href="#scalebar"/></svg>缩尺配筋</button>
          <button class="tool"><svg class="ic"><use href="#info"/></svg>钢筋信息</button>
          <button class="tool drop tight"><svg class="ic"><use href="#other"/></svg>其他</button>
          <button class="tool">关闭</button>
          <span class="rule mx-1"></span>
          <span>单构件钢筋总重(kg)：342.845</span>
        </div>
        <div class="sheet flex-grow-1">
          <table class="rebar">
            <thead><tr><th></th><th>筋号</th><th>直径(mm)</th><th>级别</th><th>图号</th><th>图形</th><th>计算公式</th><th>公式描述</th><th>长度(mm)</th><th>根数</th><th>搭接</th><th>损耗(%)</th><th>单重(kg)</th></tr></thead>
            <tbody>
              <tr class="h33"><td>1</td><td>墙身水平钢筋.1</td><td>12</td><td class="c"><svg><use href="#hrb"/></svg></td><td>64</td><td class="g"><svg height="33"><path d="M40 8v14h119V8"/><text x="19" y="20">180</text><text class="len" x="88" y="19">4320</text><text x="162" y="20">180</text></svg></td><td>3450+500-15+15*d+400-15+15*d</td><td>净长+支座宽-保护层+弯折+支座宽-保护层+弯折</td><td>4680</td><td>13</td><td>0</td><td>3</td><td>4.155</td></tr>
              <tr class="h41"><td>2</td><td>墙身水平钢筋.2</td><td>10</td><td class="c"><svg><use href="#hpb"/></svg></td><td>80</td><td class="g"><svg height="40"><path d="M43 11V8h-4v22h121V8h-4v3"/><text x="21" y="24">150</text><text class="len" x="89" y="27">4320</text><text x="162" y="24">150</text></svg></td><td>3450+500-15+15*d+400-15+15*d+12.5*d</td><td>净长+支座宽-保护层+弯折+支座宽-保护层+弯折+两倍弯钩</td><td>4745</td><td>11</td><td>0</td><td>3</td><td>2.925</td></tr>
              <tr class="h32"><td>3</td><td>墙身水平钢筋.3</td><td>12</td><td class="c"><svg><use href="#hrb"/></svg></td><td>18</td><td class="g"><svg height="32"><path d="M33 9v14h138"/><text x="10" y="21">180</text><text class="len" x="85" y="16">4320</text></svg></td><td>3450+500-15+400-15+15*d</td><td>净长+伸入相邻构件长度+支座宽-保护层+弯折</td><td>4500</td><td>13</td><td>0</td><td>3</td><td>3.995</td></tr>
              <tr class="h30 cur"><td>4*</td><td>墙身水平钢筋.4</td><td>10</td><td class="c"><svg><use href="#hpb"/></svg></td><td>3</td><td class="g"><svg height="29"><path d="M40 15h-4v4h130v-4h-4"/><text class="len" x="78" y="16">4320</text></svg></td><td>3450+500-15+400-15+12.5*d</td><td>净长+伸入相邻构件长度+伸入相邻构件长度+两倍弯钩</td><td>4445</td><td>11</td><td>0</td><td>3</td><td>2.741</td></tr>
              <tr class="h30"><td>5</td><td>墙身垂直钢筋.1</td><td>12</td><td class="c"><svg><use href="#hrb"/></svg></td><td>18</td><td class="g"><svg height="29"><path d="M33 9v14h138"/><text class="len" x="85" y="16">4485</text></svg></td><td>4700-100+100-15+10*d</td><td>墙实际高度-节点高+节点高-保护层+弯折</td><td>4820</td><td>9</td><td>0</td><td>3</td><td>4.144</td></tr>
            </tbody>
          </table>
        </div>
      </div>
    </section>

    <svg class="marks" fill="none" stroke="#f42010" stroke-width="2"><g transform="translate(-154 0)">
      <path d="M297 663L363 434M350 439l13-5 6 12M305 699L396 386M382 391l14-5 5 12"/>
    </g></svg>
  </main>
</div>
<footer class="state d-flex">
  <span class="s1">57594 Y=20759</span><span class="s2">层高:4.5</span><span class="s3">底标高:0</span><span class="s4">1(2)</span>
</footer>
<script>
  // Rebar cage: horizontal bars share one slope, vertical bars alternate between back and front faces.
  (() => {
    const out = [], P = '#7c4aa8', G = '#9c9089';
    const seg = (x1, y1, x2, y2, c) => out.push(`<path d="M${x1} ${y1}L${x2} ${y2}" stroke="${c}"/>`);
    const k = 0.2403;
    const rows = [[359,127],[397,147],[357,185],[386,207],[356,243],[393,262],[354,301],[383,323],[353,359],[352,417],[381,438],[349,533],[377,555]];
    rows.forEach(([x, y0]) => {
      const y = y0 - k * (577 - x);
      seg(x, y0, 577, y, P);
      seg(577, y, 1171, y - k * 594, G);
    });
    // returns joining the back bar to the front bar at the wall end
    [[359,127,378,143],[357,185,386,207],[356,243,375,258],[354,301,383,323],[353,359,372,375],[352,417,381,438],[349,533,377,555]].forEach(a => seg(...a, P));
    [[397,147],[393,262]].forEach(([x, y]) => out.push(`<path d="M${x} ${y}l-11 2q-9 0-9-3t10-4M${x} ${y}l-6-6" stroke="${P}"/>`));
    seg(552, 104, 542, 503, P); seg(576, 104, 566, 522, P);
    const heads = [663,687,718,743,775,799,830,855,887,911,942,966,997,1021,1053,1077,1109,1132,1164];
    const feet = [[654,476],[678,495],[709,458,'b'],[734,478,'f'],[766,448],[789,468],[821,433,'b'],[846,452,'f'],[878,423],[901,441],[933,407,'b'],[958,425,'f'],[989,396],[1013,414],[1045,380,'b'],[1069,397,'f'],[1101,368],[1125,387],[1157,353,'b']];
    feet.forEach(([x, y, hook], i) => {
      seg(heads[i], 104, x, y, G);
      if (hook === 'b') out.push(`<path d="M${x} ${y}q0 13 4 13t4-13" stroke="${G}"/>`);
      if (hook === 'f') out.push(`<path d="M${x} ${y}q-1 9-4 6t-4-16" stroke="${G}"/>`);
    });
    document.getElementById('cage').innerHTML = out.join('');
  })();
</script>
</body>
</html>
